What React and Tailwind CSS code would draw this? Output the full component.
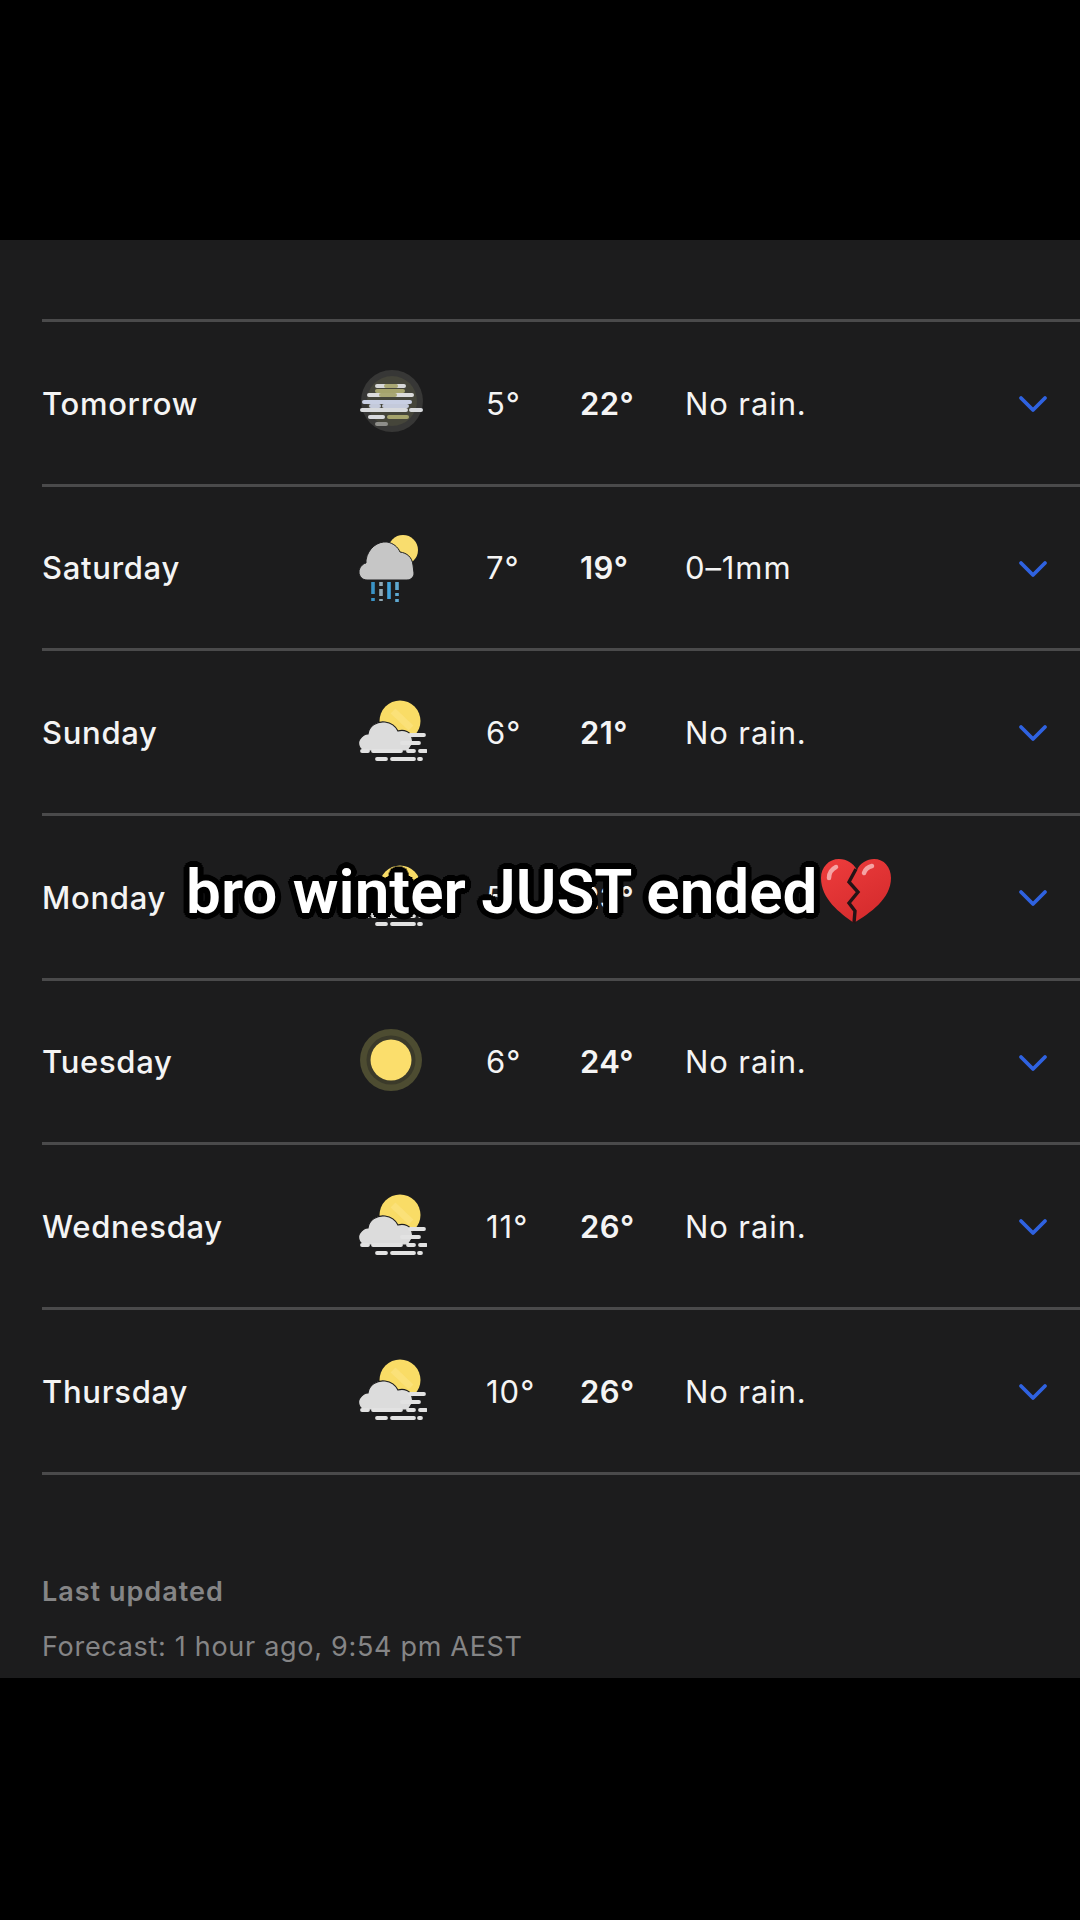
const FogSun = () => (
  <svg width="72" height="72" viewBox="0 0 72 72" fill="none">
    <circle cx="45" cy="23" r="20.5" fill="#f9dc66" />
    <path d="M38 13 L56 30" stroke="#fce68f" strokeWidth="7" opacity="0.45" />
    <path d="M11 53C4 53 2 45 5 41c2-3 5-5 8-5 1-8 9-13 17-12 7 1 11 5 13 9 6-2 13 1 14 7l1 5-5 8z" fill="#dcdcdc" stroke="#1d1d1e" strokeWidth="1.2" />
    <g stroke="#e2e2e2" strokeWidth="3.8" strokeLinecap="round">
      <path d="M55 37h14" /><path d="M47 45h17" />
      <path d="M7 53h6M18 53h28M53 53h6M65 53h6" />
      <path d="M22 61h9M37 61h22M64 61h2" />
    </g>
  </svg>
);

const RainSun = () => (
  <svg width="72" height="72" viewBox="0 0 72 72" fill="none">
    <circle cx="48" cy="16" r="15" fill="#f9dd6e" />
    <path d="M12 46C7 46 4 42 4 38c0-4 3-8 7-9 0-1 0-2 0-3 2-12 12-19 21-18 6 1 11 5 13 10 7 1 12 5 13 13l1 8c0 4-3 7-7 7z" fill="#c6c6c6" stroke="#1d1d1e" strokeWidth="1" />
    <g strokeWidth="3.6" strokeLinecap="butt">
      <path d="M18 48v12M18 64v3" stroke="#3a93c6" />
      <path d="M26 48v4M26 55v7M26 65v2" stroke="#8fa8b5" />
      <path d="M34 48v17" stroke="#43a4dc" />
      <path d="M42 48v8M42 59v3M42 65v3" stroke="#5fa8d0" />
    </g>
  </svg>
);

const FogNight = () => (
  <svg width="72" height="72" viewBox="0 0 72 72" fill="none">
    <circle cx="37" cy="32" r="31" fill="#373736" />
    <circle cx="37" cy="32" r="25" fill="#45453a" />
    <g strokeWidth="4" strokeLinecap="round">
      <path d="M22 22h26" stroke="#a5a36c" />
      <path d="M22 17h8M42 17h7" stroke="#d7d8d8" />
      <path d="M31 17h10" stroke="#a9a774" />
      <path d="M14 26h12M40 26h17" stroke="#dcdcdc" />
      <path d="M26 26h14" stroke="#a9a774" />
      <path d="M9 33h46" stroke="#c8cfe3" />
      <path d="M16 37h8M29 37h23" stroke="#c4cadb" />
      <path d="M7 41h44M56 41h10" stroke="#d8dadd" />
      <path d="M15 48h13" stroke="#d8dadd" />
      <path d="M34 48h18" stroke="#a5a36c" />
      <path d="M22 55h9" stroke="#8e8e8a" />
    </g>
  </svg>
);

const Sun = () => (
  <svg width="72" height="72" viewBox="0 0 72 72" fill="none">
    <circle cx="36" cy="32" r="31" fill="#4d4c31" />
    <circle cx="36" cy="32" r="24.5" fill="#3b3a2a" />
    <circle cx="36" cy="32" r="20.5" fill="#fbde6c" />
  </svg>
);

const Chevron = () => (
  <svg width="30" height="18" viewBox="0 0 30 18" fill="none">
    <path d="M3 3l12 12L27 3" stroke="#2f62e0" strokeWidth="3.8" strokeLinecap="round" strokeLinejoin="round" />
  </svg>
);

const BrokenHeart = () => (
  <svg width="72" height="66" viewBox="0 0 72 66" fill="none">
    <defs>
      <linearGradient id="heart" x1="0.2" y1="0" x2="0.8" y2="1">
        <stop offset="0" stopColor="#ec3b3b" />
        <stop offset="1" stopColor="#d32a2c" />
      </linearGradient>
    </defs>
    <path d="M34 65C20 55 1 41 1 20 1 9 9 1 19 1c8 0 14 4 18 11 3-7 10-11 17-11 10 0 17 8 17 19 0 21-21 35-37 45z" fill="url(#heart)" />
    <path d="M36 11l-7 13 9 10-9 11 6 8-1 12" stroke="#241416" strokeWidth="3.4" strokeLinejoin="miter" />
    <path d="M9 20c0-5 3-9 7-11" stroke="#f5a3a3" strokeWidth="4.5" strokeLinecap="round" />
    <path d="M44 15c1-3 4-6 8-7" stroke="#f5a3a3" strokeWidth="4.5" strokeLinecap="round" />
  </svg>
);

const rows = [
  ["Tomorrow", <FogNight />, "5°", "22°", "No rain."],
  ["Saturday", <RainSun />, "7°", "19°", "0–1mm"],
  ["Sunday", <FogSun />, "6°", "21°", "No rain."],
  ["Monday", <FogSun />, "5°", "23°", "No rain."],
  ["Tuesday", <Sun />, "6°", "24°", "No rain."],
  ["Wednesday", <FogSun />, "11°", "26°", "No rain."],
  ["Thursday", <FogSun />, "10°", "26°", "No rain."],
];

export default function App() {
  return (
    <div className="relative min-h-[1920px] bg-black font-['Inter',sans-serif]">
      <div className="h-[240px]" />
      <div className="h-[1438px] bg-[#1c1c1d] pl-[42px] pt-[79px]">
        <div className="border-b-[3px] border-[#4a4a4b]">
          {rows.map(([day, icon, low, high, rain]) => (
            <div key={day} className="flex h-[164.7px] items-center border-t-[3px] border-[#4a4a4b] pt-[2px] text-[#f4f4f4]">
              <div className="w-[313px] text-[31px] font-[450] tracking-[0.7px]">{day}</div>
              <div className="h-[72px] w-[131px] translate-y-[1px]">{icon}</div>
              <div className="w-[94px] text-[31px] tracking-[1px]">{low}</div>
              <div className="w-[105px] text-[31px] font-semibold tracking-[0.4px]">{high}</div>
              <div className="w-[333px] text-[31px] tracking-[0.9px]">{rain}</div>
              <Chevron />
            </div>
          ))}
        </div>
        <div className="mt-[101px] text-[27px] font-semibold leading-[32px] tracking-[1px] text-[#858586]">Last updated</div>
        <div className="mt-[23px] text-[27px] leading-[32px] tracking-[0.7px] text-[#858586]">Forecast: 1 hour ago, 9:54 pm AEST</div>
      </div>
      <div className="absolute left-[186px] top-[852px] flex items-center whitespace-nowrap">
        <span className="font-['Roboto',sans-serif] text-[62px] font-semibold leading-[80px] tracking-[0px] text-white [text-shadow:6px_0_0_#000,-6px_0_0_#000,0_6px_0_#000,0_-6px_0_#000,4px_4px_0_#000,-4px_4px_0_#000,4px_-4px_0_#000,-4px_-4px_0_#000,5px_2px_0_#000,-5px_2px_0_#000,5px_-2px_0_#000,-5px_-2px_0_#000,2px_5px_0_#000,-2px_5px_0_#000,2px_-5px_0_#000,-2px_-5px_0_#000,3px_0_0_#000,-3px_0_0_#000,0_3px_0_#000,0_-3px_0_#000]">bro winter JUST ended</span>
        <span className="ml-[2px] -translate-y-[1px]"><BrokenHeart /></span>
      </div>
    </div>
  );
}
